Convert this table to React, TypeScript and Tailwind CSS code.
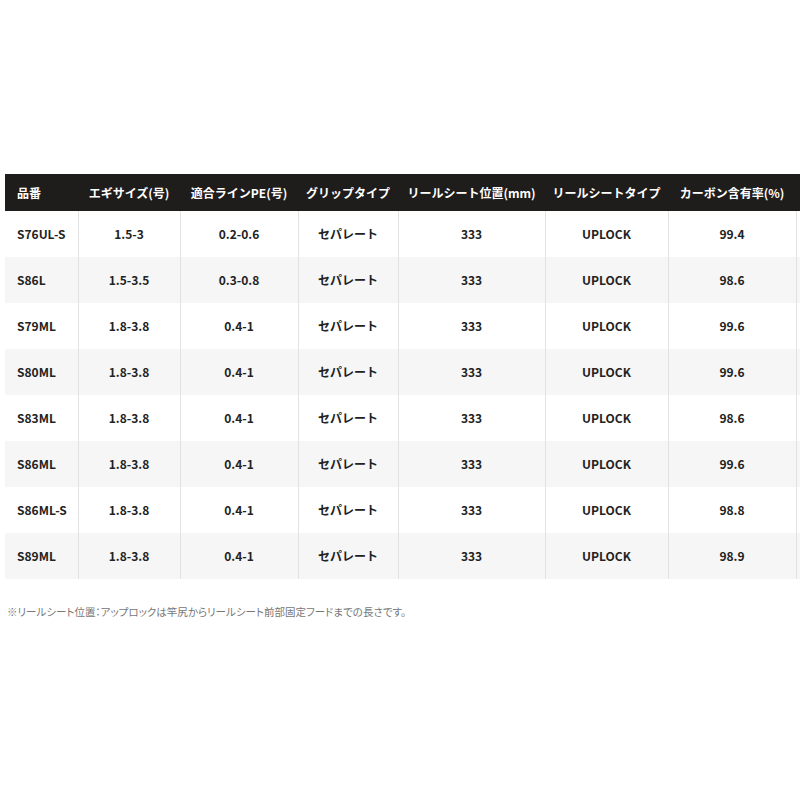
import React from 'react';

const headers = ['品番', 'エギサイズ(号)', '適合ラインPE(号)', 'グリップタイプ', 'リールシート位置(mm)', 'リールシートタイプ', 'カーボン含有率(%)', ''];
const widths = [73, 102, 118, 100, 147, 123, 128, 120];

const rows = [
  ['S76UL-S', '1.5-3', '0.2-0.6', 'セパレート', '333', 'UPLOCK', '99.4'],
  ['S86L', '1.5-3.5', '0.3-0.8', 'セパレート', '333', 'UPLOCK', '98.6'],
  ['S79ML', '1.8-3.8', '0.4-1', 'セパレート', '333', 'UPLOCK', '99.6'],
  ['S80ML', '1.8-3.8', '0.4-1', 'セパレート', '333', 'UPLOCK', '99.6'],
  ['S83ML', '1.8-3.8', '0.4-1', 'セパレート', '333', 'UPLOCK', '98.6'],
  ['S86ML', '1.8-3.8', '0.4-1', 'セパレート', '333', 'UPLOCK', '99.6'],
  ['S86ML-S', '1.8-3.8', '0.4-1', 'セパレート', '333', 'UPLOCK', '98.8'],
  ['S89ML', '1.8-3.8', '0.4-1', 'セパレート', '333', 'UPLOCK', '98.9'],
];

export default function App() {
  return (
    <div
      className="w-[800px] h-[800px] bg-white overflow-hidden pt-[174px]"
      style={{ fontFamily: '"Noto Sans CJK JP", "Noto Sans", sans-serif' }}
    >
      <div className="pl-[5px] overflow-hidden">
        <table className="table-fixed border-collapse w-[911px]">
          <colgroup>
            {widths.map((w, i) => (
              <col key={i} style={{ width: w }} />
            ))}
          </colgroup>
          <thead>
            <tr className="bg-[#1f1c1c] h-[37px]">
              {headers.map((h, i) => (
                <th
                  key={i}
                  className={`p-0 text-[12px] font-bold text-white whitespace-nowrap ${i === 0 ? 'text-left pl-[12px]' : 'text-center'}`}
                >
                  {h}
                </th>
              ))}
            </tr>
          </thead>
          <tbody>
            {rows.map((r, ri) => (
              <tr key={ri} className={`h-[46px] ${ri % 2 === 1 ? 'bg-[#f6f6f6]' : 'bg-white'}`}>
                {[...r, ''].map((c, ci) => (
                  <td
                    key={ci}
                    className={`p-0 text-[12px] font-bold text-[#222] whitespace-nowrap ${ci === 0 ? 'text-left pl-[12px]' : 'text-center border-l border-[#e2e2e2]'}`}
                  >
                    {c}
                  </td>
                ))}
              </tr>
            ))}
          </tbody>
        </table>
      </div>
      {/* footnote uses proportional kana like the source page */}
      <p className="mt-[25px] pl-[7px] text-[10.5px] text-[#777] [font-feature-settings:'palt']">
        ※リールシート位置：アップロックは竿尻からリールシート前部固定フードまでの長さです。
      </p>
    </div>
  );
}
